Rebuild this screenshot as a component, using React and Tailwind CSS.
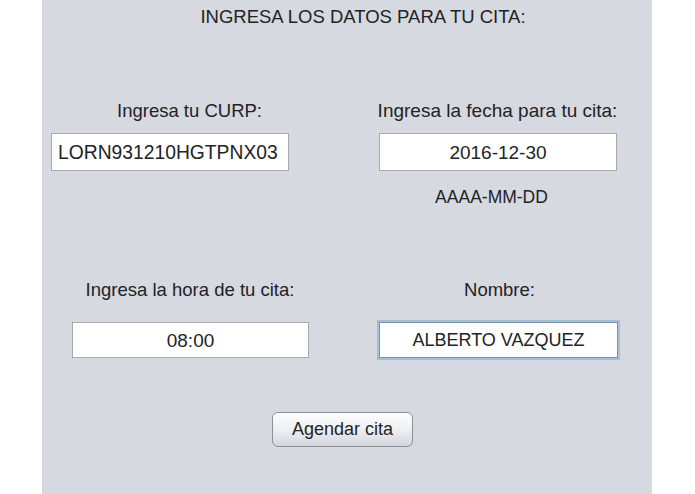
export default function App() {
  const font = { fontFamily: '"Liberation Sans", Arial, sans-serif' };
  return (
    <div className="w-[695px] h-[494px] bg-white flex" style={font}>
      <div className="ml-[42px] w-[610px] h-[494px] bg-[#d6d9df] flex flex-col text-[18.5px] leading-[21px] text-[#222326]">
        <div className="pt-[6px] flex justify-center pl-[32px]">INGRESA LOS DATOS PARA TU CITA:</div>

        <div className="flex mt-[73px]">
          <div className="w-[300px] flex flex-col">
            <div className="w-[295px] text-center">Ingresa tu CURP:</div>
            <div className="ml-[9px] mt-[12px] w-[238px] h-[38px] bg-white border border-[#a7a9ac] flex items-center pl-[6px] text-[19.3px]">
              LORN931210HGTPNX03
            </div>
          </div>
          <div className="w-[310px] flex flex-col">
            <div className="w-[311px] text-center text-[19px]">Ingresa la fecha para tu cita:</div>
            <div className="ml-[37px] mt-[12px] w-[238px] h-[38px] bg-white border border-[#a7a9ac] flex items-center justify-center text-[19px]">
              2016-12-30
            </div>
            <div className="mt-[16px] w-[299px] text-center text-[17.5px]">AAAA-MM-DD</div>
          </div>
        </div>

        <div className="flex mt-[71px]">
          <div className="w-[300px] flex flex-col">
            <div className="w-[296px] text-center">Ingresa la hora de tu cita:</div>
            <div className="ml-[30px] mt-[22px] w-[237px] h-[36px] bg-white border border-[#a7a9ac] flex items-center justify-center text-[19px]">
              08:00
            </div>
          </div>
          <div className="w-[310px] flex flex-col">
            <div className="w-[315px] text-center">Nombre:</div>
            <div className="ml-[35px] mt-[20px] w-[243px] h-[40px] bg-white border-2 border-[#a6bfd8] shadow-[inset_0_0_0_1px_#7592b1] flex items-center justify-center text-[18px]">
              ALBERTO VAZQUEZ
            </div>
          </div>
        </div>

        <div className="flex mt-[52px] pl-[230px]">
          <div className="w-[141px] h-[35px] rounded-[6px] border border-[#8d9094] bg-gradient-to-b from-[#fdfdfe] via-[#eef0f3] to-[#d3d6dc] flex items-center justify-center shadow-[inset_0_1px_0_#ffffff] text-[18px]">
            Agendar cita
          </div>
        </div>
      </div>
    </div>
  );
}
